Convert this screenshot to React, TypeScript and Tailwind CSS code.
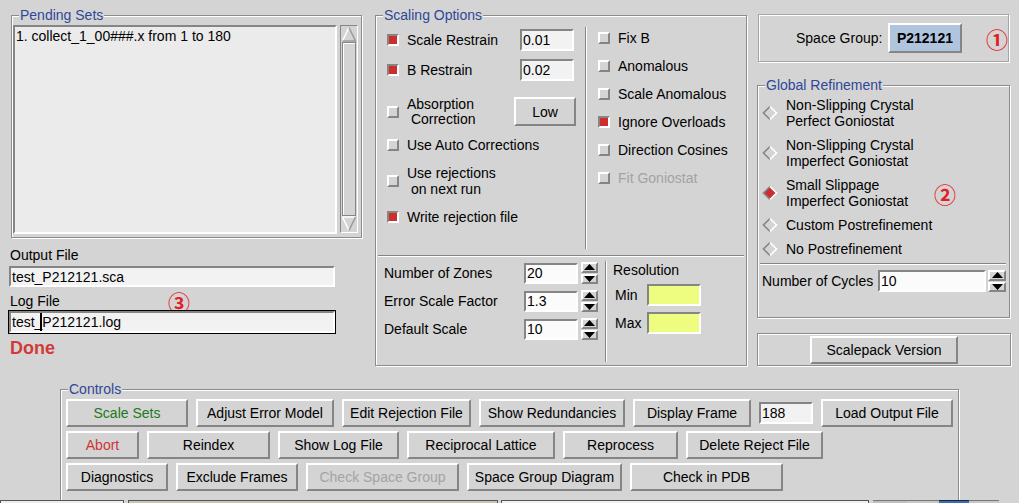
import React from "react";

const raised = "border-2 border-t-white border-l-white border-r-[#858585] border-b-[#858585]";
const sunken = "border-2 border-t-[#858585] border-l-[#858585] border-r-white border-b-white";

function Group({ title, className = "", children }: { title?: string; className?: string; children?: React.ReactNode }) {
  return (
    <div className={`relative border border-[#8c8c8c] shadow-[inset_1px_1px_0_#fff,1px_1px_0_#fff] ${className}`}>
      {title && (
        <span className="absolute left-[7px] top-[-9px] bg-[#d4d4d4] px-[1px] text-[14px] leading-[16px] text-[#2f4799] whitespace-nowrap">
          {title}
        </span>
      )}
      {children}
    </div>
  );
}

function Check({ on }: { on?: boolean }) {
  return <div className={`w-[12px] h-[12px] shrink-0 ${on ? sunken + " bg-[#cc2e2e]" : raised + " bg-[#d4d4d4]"}`} />;
}

function Radio({ on }: { on?: boolean }) {
  return (
    <svg width="16" height="16" viewBox="0 0 16 16" className="shrink-0">
      <polygon points="8,1.5 14.5,8 8,14.5 1.5,8" fill={on ? "#cc2e2e" : "#d4d4d4"} />
      <polyline points="8,1.5 1.5,8 8,14.5" fill="none" stroke="#858585" strokeWidth="1.6" />
      <polyline points="8,1.5 14.5,8 8,14.5" fill="none" stroke="#ffffff" strokeWidth="1.6" />
    </svg>
  );
}

function Spin({ className = "" }: { className?: string }) {
  return (
    <div className={`flex flex-col gap-[1px] shrink-0 ${className}`}>
      <div className={`${raised} flex-1 flex items-center justify-center bg-[#d4d4d4]`}>
        <svg width="11" height="6" viewBox="0 0 11 6">
          <polygon points="5.5,0 11,6 0,6" fill="#000" />
        </svg>
      </div>
      <div className={`${raised} flex-1 flex items-center justify-center bg-[#d4d4d4]`}>
        <svg width="11" height="6" viewBox="0 0 11 6">
          <polygon points="0,0 11,0 5.5,6" fill="#000" />
        </svg>
      </div>
    </div>
  );
}

function Entry({ className = "", children }: { className?: string; children?: React.ReactNode }) {
  return (
    <div className={`${sunken} flex items-center pl-[1px] shrink-0 whitespace-nowrap overflow-hidden ${className}`}>
      {children}
    </div>
  );
}

function Btn({ className = "", children }: { className?: string; children?: React.ReactNode }) {
  return (
    <div className={`${raised} h-[28px] flex items-center justify-center bg-[#d4d4d4] shrink-0 whitespace-nowrap ${className}`}>
      {children}
    </div>
  );
}

function Circled({ children, className = "" }: { children: React.ReactNode; className?: string }) {
  return (
    <span className={`font-['Noto_Sans_CJK_SC',sans-serif] font-bold text-[22px] leading-[22px] text-[#e41e26] shrink-0 ${className}`}>
      {children}
    </span>
  );
}

function Scrollbar() {
  return (
    <div className="ml-[3px] w-[18px] h-[208px] border border-t-[#858585] border-l-[#858585] border-r-white border-b-white flex flex-col">
      <svg width="16" height="16" viewBox="0 0 16 16" className="shrink-0">
        <polyline points="1.5,15 8,1.5" stroke="#ffffff" strokeWidth="1.5" fill="none" />
        <polyline points="8,1.5 14.5,15 1.5,15" stroke="#9a9a9a" strokeWidth="1.5" fill="none" />
      </svg>
      <div className="flex-1 mx-[1px] border border-[#858585] shadow-[inset_1px_1px_0_#fff]" />
      <svg width="16" height="16" viewBox="0 0 16 16" className="shrink-0">
        <polyline points="1.5,1 14.5,1" stroke="#ffffff" strokeWidth="1.5" fill="none" />
        <polyline points="1.5,1 8,14.5" stroke="#ffffff" strokeWidth="1.5" fill="none" />
        <polyline points="8,14.5 14.5,1" stroke="#9a9a9a" strokeWidth="1.5" fill="none" />
      </svg>
    </div>
  );
}

const vsep = "w-[2px] border-l border-l-[#858585] border-r border-r-white";
const hsep = "h-[2px] border-t border-t-[#858585] border-b border-b-white";

export default function App() {
  return (
    <div className="w-[1019px] h-[503px] overflow-hidden bg-[#d4d4d4] flex flex-col font-['Liberation_Sans',Arial,Helvetica,sans-serif] text-[14px] leading-[16px] text-black">
      <div className="h-[500px] overflow-hidden flex flex-col shrink-0">
        <div className="flex h-[389px] shrink-0">
          {/* Left column */}
          <div className="w-[362px] flex flex-col shrink-0">
            <Group title="Pending Sets" className="ml-[11px] mt-[15px] w-[351px] h-[223px] flex pl-[1px] pt-[9px]">
              <div className={`${sunken} w-[324px] h-[209px] bg-[#ebebeb] pl-[1px] pt-[1px]`}>
                1. collect_1_00###.x from 1 to 180
              </div>
              <Scrollbar />
            </Group>
            <div className="ml-[10px] mt-[9px] h-[16px]">Output File</div>
            <Entry className="ml-[9px] mt-[3px] w-[326px] h-[21px] bg-[#f2f2f2]">test_P212121.sca</Entry>
            <div className="ml-[10px] mt-[6px] h-[16px] flex items-center">
              <span className="w-[158px]">Log File</span>
              <Circled>③</Circled>
            </div>
            <div className="ml-[8px] mt-[1px] w-[328px] h-[24px] border border-black flex">
              <Entry className="flex-1 h-full bg-[#f2f2f2]">
                test_
                <span className="relative">
                  <span className="absolute left-[-2px] top-[-9px] w-[2px] h-[18px] bg-black" />
                </span>
                P212121.log
              </Entry>
            </div>
            <div className="ml-[10px] mt-[4px] h-[20px] leading-[20px] text-[18px] font-bold text-[#d23a3a]">Done</div>
          </div>

          {/* Middle column */}
          <Group title="Scaling Options" className="ml-[13px] mt-[15px] w-[372px] h-[351px] flex flex-col shrink-0">
            <div className="flex h-[239px] shrink-0">
              <div className="w-[209px] flex flex-col pl-[11px] shrink-0">
                <div className="mt-[12px] h-[23px] flex items-center">
                  <Check on />
                  <span className="ml-[8px] w-[113px]">Scale Restrain</span>
                  <Entry className="w-[54px] h-[22px] bg-[#f2f2f2]">0.01</Entry>
                </div>
                <div className="mt-[7px] h-[23px] flex items-center">
                  <Check on />
                  <span className="ml-[8px] w-[113px]">B Restrain</span>
                  <Entry className="w-[54px] h-[22px] bg-[#f2f2f2]">0.02</Entry>
                </div>
                <div className="mt-[15px] h-[31px] flex items-center">
                  <Check />
                  <span className="ml-[8px] w-[107px] leading-[15px] whitespace-pre">{"Absorption\n Correction"}</span>
                  <Btn className="w-[62px] !h-[29px]">Low</Btn>
                </div>
                <div className="mt-[9px] h-[18px] flex items-center">
                  <Check />
                  <span className="ml-[8px]">Use Auto Corrections</span>
                </div>
                <div className="mt-[11px] h-[32px] flex items-center">
                  <Check />
                  <span className="ml-[8px] leading-[16px] whitespace-pre">{"Use rejections\n on next run"}</span>
                </div>
                <div className="mt-[11px] h-[18px] flex items-center">
                  <Check on />
                  <span className="ml-[8px]">Write rejection file</span>
                </div>
              </div>
              <div className={`${vsep} mt-[11px] mb-[6px]`} />
              <div className="flex-1 flex flex-col pl-[11px] pt-[8px]">
                {[
                  ["Fix B", false, false],
                  ["Anomalous", false, false],
                  ["Scale Anomalous", false, false],
                  ["Ignore Overloads", true, false],
                  ["Direction Cosines", false, false],
                  ["Fit Goniostat", false, true],
                ].map(([label, on, dis]) => (
                  <div key={label as string} className="h-[28px] flex items-center">
                    <Check on={on as boolean} />
                    <span className={`ml-[8px] ${dis ? "text-[#a3a3a3]" : ""}`}>{label as string}</span>
                  </div>
                ))}
              </div>
            </div>
            <div className={`${hsep} mx-[2px] shrink-0`} />
            <div className="flex flex-1">
              <div className="w-[229px] flex flex-col pl-[8px] pt-[5px] gap-[6px] shrink-0">
                {[
                  ["Number of Zones", "20"],
                  ["Error Scale Factor", "1.3"],
                  ["Default Scale", "10"],
                ].map(([label, val]) => (
                  <div key={label} className="h-[22px] flex items-center">
                    <span className="w-[140px]">{label}</span>
                    <Entry className="w-[54px] h-[21px] bg-[#fbfbfb]">{val}</Entry>
                    <Spin className="ml-[3px] w-[17px] h-[22px]" />
                  </div>
                ))}
              </div>
              <div className={`${vsep} mt-[4px] mb-[3px]`} />
              <div className="flex-1 flex flex-col pl-[6px] pt-[5px]">
                <div className="h-[16px]">Resolution</div>
                <div className="mt-[6px] h-[22px] flex items-center pl-[2px]">
                  <span className="w-[32px]">Min</span>
                  <Entry className="w-[54px] h-[22px] bg-[#eefc80]" />
                </div>
                <div className="mt-[6px] h-[22px] flex items-center pl-[2px]">
                  <span className="w-[32px]">Max</span>
                  <Entry className="w-[54px] h-[22px] bg-[#eefc80]" />
                </div>
              </div>
            </div>
          </Group>

          {/* Right column */}
          <div className="ml-[10px] w-[254px] flex flex-col shrink-0">
            <Group className="ml-[1px] mt-[14px] w-[251px] h-[48px] flex items-center pl-[37px] border-[#a5a5a5]">
              <span className="w-[97px]">Space Group:</span>
              <div className={`${raised} w-[78px] h-[30px] bg-[#b0c4de] flex items-center justify-center font-bold`}>P212121</div>
              <Circled className="ml-[24px]">①</Circled>
            </Group>
            <Group title="Global Refinement" className="mt-[23px] w-[253px] h-[233px] flex flex-col pl-[4px]">
              <div className="mt-[11px] h-[32px] flex items-center">
                <Radio />
                <div className="ml-[8px] leading-[16px]">Non-Slipping Crystal<br />Perfect Goniostat</div>
              </div>
              <div className="mt-[8px] h-[32px] flex items-center">
                <Radio />
                <div className="ml-[8px] leading-[16px]">Non-Slipping Crystal<br />Imperfect Goniostat</div>
              </div>
              <div className="mt-[8px] h-[32px] flex items-center">
                <Radio on />
                <div className="ml-[8px] leading-[16px] w-[148px]">Small Slippage<br />Imperfect Goniostat</div>
                <Circled>②</Circled>
              </div>
              <div className="mt-[8px] h-[16px] flex items-center">
                <Radio />
                <div className="ml-[8px]">Custom Postrefinement</div>
              </div>
              <div className="mt-[8px] h-[16px] flex items-center">
                <Radio />
                <div className="ml-[8px]">No Postrefinement</div>
              </div>
              <div className={`${hsep} mt-[6px] ml-[-2px] mr-[3px]`} />
              <div className="mt-[5px] h-[22px] flex items-center">
                <span className="w-[116px]">Number of Cycles</span>
                <Entry className="w-[108px] h-[22px] bg-[#fbfbfb]">10</Entry>
                <Spin className="ml-[2px] w-[18px] h-[22px]" />
              </div>
            </Group>
            <Group className="mt-[15px] w-[254px] h-[33px] flex items-center pl-[52px]">
              <Btn className="w-[148px]">Scalepack Version</Btn>
            </Group>
          </div>
        </div>

        {/* Controls */}
        <Group title="Controls" className="ml-[60px] w-[899px] h-[130px] pt-[9px] pl-[5px] flex flex-col gap-[4px] shrink-0">
          <div className="flex items-center gap-[8px] h-[28px]">
            <Btn className="w-[122px] text-[#1b7a1b]">Scale Sets</Btn>
            <Btn className="w-[138px]">Adjust Error Model</Btn>
            <Btn className="w-[129px]">Edit Rejection File</Btn>
            <Btn className="w-[146px]">Show Redundancies</Btn>
            <Btn className="w-[118px]">Display Frame</Btn>
            <Entry className="w-[54px] h-[22px] bg-[#f2f2f2]">188</Entry>
            <Btn className="w-[132px]">Load Output File</Btn>
          </div>
          <div className="flex items-center gap-[8px] h-[28px]">
            <Btn className="w-[73px] text-[#d03434]">Abort</Btn>
            <Btn className="w-[123px]">Reindex</Btn>
            <Btn className="w-[121px]">Show Log File</Btn>
            <Btn className="w-[148px]">Reciprocal Lattice</Btn>
            <Btn className="w-[115px]">Reprocess</Btn>
            <Btn className="w-[137px]">Delete Reject File</Btn>
          </div>
          <div className="flex items-center gap-[8px] h-[28px]">
            <Btn className="w-[102px]">Diagnostics</Btn>
            <Btn className="w-[122px]">Exclude Frames</Btn>
            <Btn className="w-[153px] text-[#a3a3a3]">Check Space Group</Btn>
            <Btn className="w-[155px]">Space Group Diagram</Btn>
            <Btn className="w-[153px]">Check in PDB</Btn>
          </div>
        </Group>
      </div>

      {/* bottom strip (taskbar edge) */}
      <div className="flex h-[3px] shrink-0">
        <div className="w-[124px] bg-[#ececec] border-t border-x border-[#555]" />
        <div className="ml-[4px] w-[370px] bg-[#cbc5b7] border-t border-x border-[#555]" />
        <div className="ml-[3px] w-[368px] bg-[#f0f0f0] border-t border-x border-[#555]" />
        <div className="ml-[4px] w-[34px] bg-[#c0c0c0] border-t border-[#777]" />
        <div className="w-[32px] bg-[#c8c8c8] border-t border-[#777]" />
        <div className="w-[30px] bg-[#3a6cb0] border-t border-[#224]" />
        <div className="w-[30px] bg-[#c8c8c8] border-t border-[#777]" />
      </div>
    </div>
  );
}
